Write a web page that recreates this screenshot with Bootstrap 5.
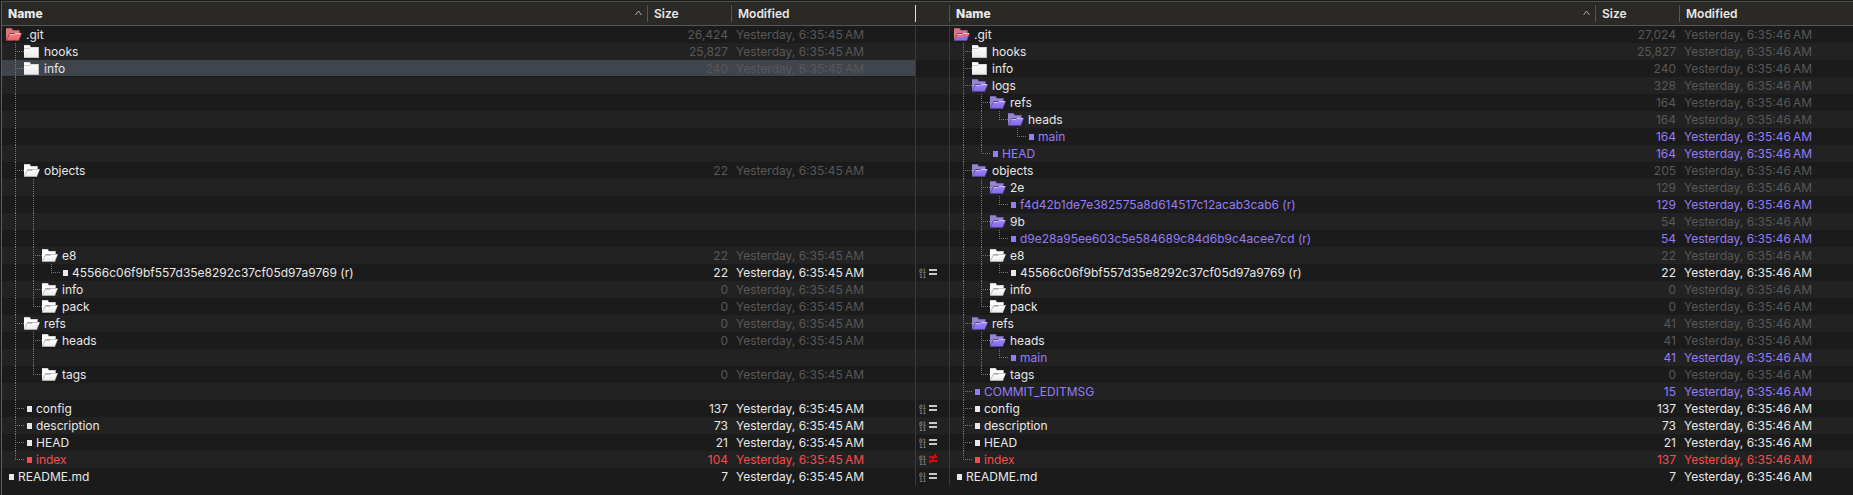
<!DOCTYPE html>
<html lang="en" data-bs-theme="dark">
<head>
<meta charset="utf-8">
<meta name="viewport" content="width=device-width, initial-scale=1">
<title>Folder Compare</title>
<link href="https://cdn.jsdelivr.net/npm/bootstrap@5.3.0/dist/css/bootstrap.min.css" rel="stylesheet">
<style>
  body { background: #1b1b1b; color: #e8e8e8; font-family: Inter, "Liberation Sans", sans-serif; font-size: 12px; line-height: 17px; }
  .frame { border-top: 1px solid #4e4e4e; border-left: 1px solid #5c5c5c; margin: 1px 0 0 1px; min-height: calc(100vh - 1px); }
  .compare { table-layout: fixed; border-collapse: separate; border-spacing: 0; white-space: nowrap; }
  .compare th, .compare td { padding: 0; overflow: hidden; }
  .compare thead th { height: 24px; background: #2a2926; border-bottom: 1px solid #565553; font-weight: 600; }
  .compare thead th > div { height: 17px; border-right: 1px solid #555; padding: 0 5px 0 6px; }
  .compare thead th.end > div { border-color: #ddd; }
  .compare thead th:last-child > div { border: 0; }
  .compare thead th.sorted { font-weight: 800; }
  .compare tbody tr { height: 17px; }
  .compare tbody tr:nth-child(even) { background: #222; }
  .size-col { width: 84px; }
  .date-col { width: 184px; }
  .last-col { width: 173px; }
  .mid-col { width: 34px; }
  .compare td.end, .compare td.mid { border-right: 1px solid #3a3a3a; }
  .compare td.picked { background: linear-gradient(#40454d, #40454d) 0 0 / 100% 16px no-repeat; }
  .tree { height: 17px; padding-left: 4px; }
  .size { text-align: right; padding-right: 4px !important; }
  .date { padding-left: 4px !important; }
  .dim { color: #585858; }
  .new { color: #957cf8; }
  .diff { color: #f94b4b; }
  .guide { width: 18px; height: 17px; flex: none; --dot: #777; }
  .guide.run { background: repeating-linear-gradient(var(--dot) 0 1px, transparent 1px 2px) 9px 0 / 1px 17px no-repeat; }
  .guide.tee { background: repeating-linear-gradient(var(--dot) 0 1px, transparent 1px 2px) 9px 0 / 1px 17px no-repeat, repeating-linear-gradient(90deg, var(--dot) 0 1px, transparent 1px 2px) 9px 8px / 9px 1px no-repeat; }
  .guide.elbow { background: repeating-linear-gradient(var(--dot) 0 1px, transparent 1px 2px) 9px 0 / 1px 9px no-repeat, repeating-linear-gradient(90deg, var(--dot) 0 1px, transparent 1px 2px) 9px 8px / 9px 1px no-repeat; }
  .folder { width: 16px; height: 13px; margin: 2px 4px 0 0; flex: none; }
  .doc { width: 5px; height: 6px; margin: 6px 4px 0 3px; background: currentColor; flex: none; }
  .marks { height: 17px; }
  .bits { font: 6px/5px "DejaVu Sans Mono", monospace; color: #a0a0a0; margin: 4px 3px 0 3px; }
  .verdict { width: 8px; height: 9px; margin-top: 3px; }
</style>
</head>
<body>
<svg class="position-absolute" width="0" height="0" aria-hidden="true">
  <defs>
    <linearGradient id="g-white" x2="0" y2="1"><stop offset="0" stop-color="#fff"/><stop offset="1" stop-color="#ececec"/></linearGradient>
    <linearGradient id="g-red" x2="0" y2="1"><stop offset="0" stop-color="#ff8080"/><stop offset="1" stop-color="#f0606a"/></linearGradient>
    <linearGradient id="g-new" x2="0" y2="1"><stop offset="0" stop-color="#9e86fb"/><stop offset="1" stop-color="#8468ea"/></linearGradient>
    <linearGradient id="g-both" x1="0.3" y1="0" x2="0.7" y2="1"><stop offset="0.5" stop-color="#f8686c"/><stop offset="0.5" stop-color="#8a6ff0"/></linearGradient>
  </defs>
</svg>
<main class="frame">
  <table class="compare w-100">
    <colgroup><col><col class="size-col"><col class="date-col"><col class="mid-col"><col><col class="size-col"><col class="last-col"></colgroup>
    <thead>
      <tr>
        <th class="sorted" scope="col"><div class="d-flex justify-content-between"><span>Name</span><svg width="7" height="17"><path d="M.5 10 3.500 6l3 4" fill="none" stroke="#aaa"/></svg></div></th>
        <th scope="col"><div>Size</div></th>
        <th scope="col" class="end"><div>Modified</div></th>
        <th><div></div></th>
        <th class="sorted" scope="col"><div class="d-flex justify-content-between"><span>Name</span><svg width="7" height="17"><path d="M.5 10 3.500 6l3 4" fill="none" stroke="#aaa"/></svg></div></th>
        <th scope="col"><div>Size</div></th>
        <th scope="col"><div>Modified</div></th>
      </tr>
    </thead>
    <tbody id="rows"></tbody>
  </table>
</main>
<script src="https://cdn.jsdelivr.net/npm/bootstrap@5.3.0/dist/js/bootstrap.bundle.min.js"></script>
<script>
  // One row per entry: left side, right side, verdict. A side is "guides;icon;name;size".
  // Guides: | run, + tee, L elbow, _ blank.
  // Icons: W open, C closed, R red, N new, B red and new, f file, n new file, d differing file.
  const rows = [
    [";R;.git;26,424", ";B;.git;27,024"],
    ["+;C;hooks;25,827", "+;C;hooks;25,827"],
    ["+;C;info;240", "+;C;info;240", "", true],
    ["|", "+;N;logs;328"],
    ["|", "|+;N;refs;164"],
    ["|", "||L;N;heads;164"],
    ["|", "||_L;n;main;164"],
    ["|", "|L;n;HEAD;164"],
    ["+;W;objects;22", "+;N;objects;205"],
    ["||", "|+;N;2e;129"],
    ["||", "||L;n;f4d42b1de7e382575a8d614517c12acab3cab6 (r);129"],
    ["||", "|+;N;9b;54"],
    ["||", "||L;n;d9e28a95ee603c5e584689c84d6b9c4acee7cd (r);54"],
    ["|+;W;e8;22", "|+;W;e8;22"],
    ["||L;f;45566c06f9bf557d35e8292c37cf05d97a9769 (r);22", "||L;f;45566c06f9bf557d35e8292c37cf05d97a9769 (r);22", "="],
    ["|+;W;info;0", "|+;W;info;0"],
    ["|L;W;pack;0", "|L;W;pack;0"],
    ["+;W;refs;0", "+;N;refs;41"],
    ["|+;W;heads;0", "|+;N;heads;41"],
    ["||", "||L;n;main;41"],
    ["|L;W;tags;0", "|L;W;tags;0"],
    ["|", "+;n;COMMIT_EDITMSG;15"],
    ["+;f;config;137", "+;f;config;137", "="],
    ["+;f;description;73", "+;f;description;73", "="],
    ["+;f;HEAD;21", "+;f;HEAD;21", "="],
    ["L;d;index;104", "L;d;index;137", "x"],
    [";f;README.md;7", ";f;README.md;7", "="]
  ];
  const guideClass = { "|": "run", "+": "tee", "L": "elbow", "_": "" };
  const fills = { W: ["#fff", "g-white", "#aaa"], R: ["#d8777a", "g-red", "#8f3f43"], N: ["#9585d0", "g-new", "#54448f"], B: ["#d8777a", "g-both", "#6a4484"] };

  function icon(kind) {
    if ("fnd".includes(kind)) return '<span class="doc"></span>';
    if (kind === "C") return '<svg class="folder" viewBox="0 0 16 13"><path d="M0 0h6l1 2h8v11H0z" fill="#bdbdbd"/><path d="M0 .5h5.500l1 2H14V12H0z" fill="url(#g-white)"/><path d="M0 3.500h6l1-1" fill="none" stroke="#ccc"/></svg>';
    const [back, front, edge] = fills[kind];
    return `<svg class="folder" viewBox="0 0 16 13"><path d="M0 0h6l1 2h7v3h2l-3 8H0z" fill="${edge}"/><path d="M0 .5h5.500l1 2H13V5H0V12z" fill="${back}"/><path d="M0 4h4l-2 4-2 4z" fill="${back}"/><path d="M3.500 6.500H8L9 5.500h6.500L12.500 12H.8z" fill="url(#${front})"/><path d="M3.500 6.500H8L9 5.500h6" fill="none" stroke="${kind === "W" ? "#bbb" : "#fff"}" stroke-opacity=".6"/></svg>`;
  }

  function side(text, time, picked, end) {
    const [guides, kind, name, size] = text.split(";");
    const lines = [...guides].map(g => `<span class="guide ${guideClass[g]}"></span>`).join("");
    const tone = kind === "n" ? "new" : kind === "d" ? "diff" : "";
    const meta = tone || (kind === "f" ? "" : "dim");
    const pick = picked ? " picked" : "";
    const body = name ? `${icon(kind)}<span>${name}</span>` : "";
    const date = name ? `Yesterday, ${time}\u202fAM` : "";
    return `<td class="${tone}${pick}"><div class="tree d-flex">${lines}${body}</div></td>` +
      `<td class="size ${meta}${pick}">${size || ""}</td><td class="date ${meta}${pick}${end ? " end" : ""}">${date}</td>`;
  }

  function verdict(mark) {
    if (!mark) return "";
    const shape = mark === "="
      ? '<path d="M0 2h8v2H0zM0 6h8v2H0z" fill="#c8c8c8"/>'
      : '<path d="M0 2h8v2H0zM0 6h8v2H0z" fill="#e0000f"/><path d="M7 0 1 9" stroke="#e0000f" stroke-width="2"/>';
    return `<div class="marks d-flex"><span class="bits">01<br>11</span><svg class="verdict" viewBox="0 0 8 9">${shape}</svg></div>`;
  }

  document.getElementById("rows").innerHTML = rows.map(([l, r, mark, picked]) =>
    `<tr>${side(l, "6:35:45", picked, true)}<td class="mid">${verdict(mark)}</td>${side(r, "6:35:46", false, false)}</tr>`).join("");
</script>
</body>
</html>
